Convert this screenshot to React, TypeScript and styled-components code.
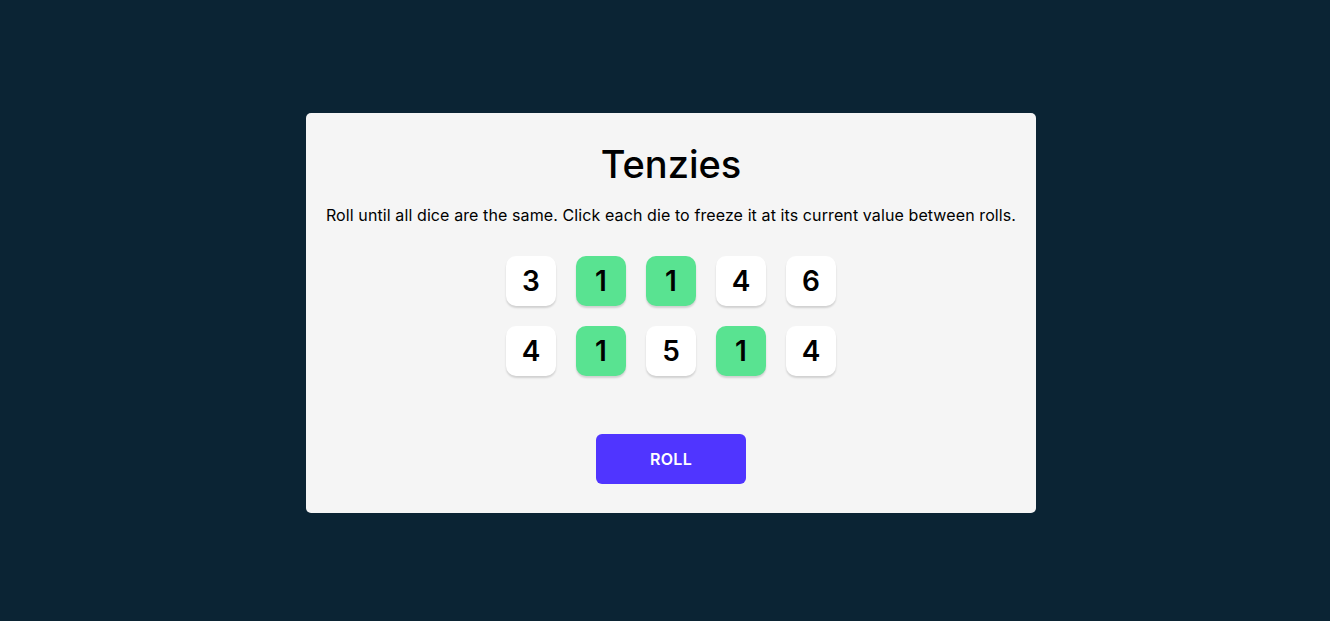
import React from "react";
import styled, { createGlobalStyle } from "styled-components";

const Global = createGlobalStyle`
  html, body { margin: 0; padding: 0; }
  body {
    background: #0B2434;
    font-family: Inter, "Noto Sans", sans-serif;
    height: 621px;
  }
  #root { height: 621px; }
`;

const Page = styled.div`
  height: 621px;
  box-sizing: border-box;
  padding: 4px 0 0 12px;
  display: flex;
  align-items: center;
  justify-content: center;
`;

const Card = styled.main`
  width: 730px;
  height: 400px;
  box-sizing: border-box;
  padding-top: 32px;
  background: #F5F5F5;
  border-radius: 5px;
  display: flex;
  flex-direction: column;
  align-items: center;
`;

const Title = styled.h1`
  margin: 0;
  font-size: 38px;
  line-height: 38px;
  font-weight: 500;
  color: #000;
`;

const Instructions = styled.p`
  margin: 22px 0 0;
  font-size: 16px;
  line-height: 20px;
  letter-spacing: 0.1px;
  font-weight: 400;
  color: #000;
  text-align: center;
`;

const DiceGrid = styled.div`
  margin-top: 31px;
  display: grid;
  grid-template-columns: repeat(5, 50px);
  gap: 20px;
`;

const Die = styled.button<{ $held: boolean }>`
  width: 50px;
  height: 50px;
  border: none;
  border-radius: 10px;
  box-shadow: 0px 2px 2px rgba(0, 0, 0, 0.15);
  background: ${(p) => (p.$held ? "#59E391" : "#FFFFFF")};
  font-family: Inter, sans-serif;
  font-size: 28px;
  font-weight: 600;
  color: #000;
  display: flex;
  align-items: center;
  justify-content: center;
  padding: 0;
  cursor: pointer;
`;

const RollButton = styled.button`
  margin-top: 58px;
  width: 150px;
  height: 50px;
  border: none;
  border-radius: 6px;
  background: #5035FF;
  color: #fff;
  font-family: Inter, sans-serif;
  font-size: 16px;
  font-weight: 600;
  letter-spacing: 0.3px;
  cursor: pointer;
`;

const dice = [
  { v: 3, h: false },
  { v: 1, h: true },
  { v: 1, h: true },
  { v: 4, h: false },
  { v: 6, h: false },
  { v: 4, h: false },
  { v: 1, h: true },
  { v: 5, h: false },
  { v: 1, h: true },
  { v: 4, h: false },
];

export default function App() {
  return (
    <>
      <Global />
      <Page>
        <Card>
          <Title>Tenzies</Title>
          <Instructions>
            Roll until all dice are the same. Click each die to freeze it at its current value between rolls.
          </Instructions>
          <DiceGrid>
            {dice.map((d, i) => (
              <Die key={i} $held={d.h}>{d.v}</Die>
            ))}
          </DiceGrid>
          <RollButton>ROLL</RollButton>
        </Card>
      </Page>
    </>
  );
}
